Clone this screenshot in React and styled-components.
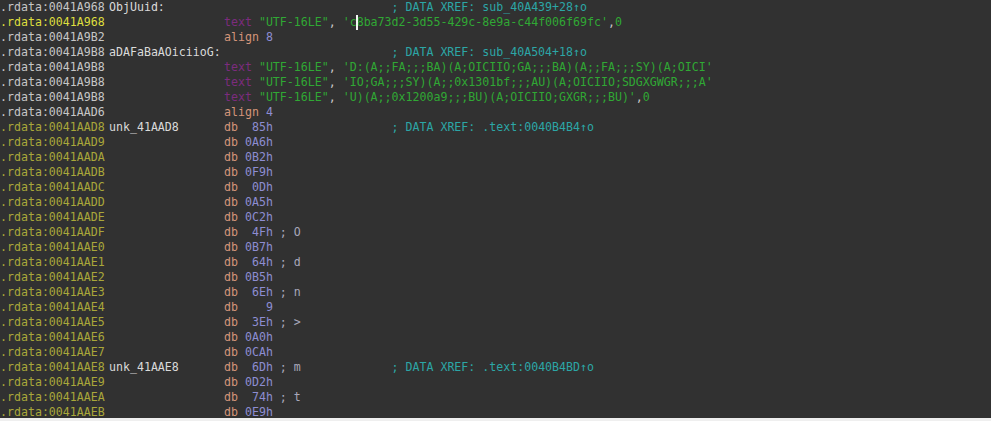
import React from 'react';
import styled, { createGlobalStyle } from 'styled-components';

const GlobalStyle = createGlobalStyle`
    html, body {
        margin: 0;
        padding: 0;
        background: #efefef;
    }
`;

const colors = {
    addr: '#c6c6c6',
    cur: '#dede3e',
    seg: '#a9a73a',
    nm: '#dadada',
    kw: '#7c2c7e',
    str: '#30a834',
    pl: '#c6c6c6',
    mn: '#d4957a',
    num: '#8d8dd2',
    xr: '#2ca6a6',
    cm: '#a8a8ba',
};

const Listing = styled.div`
    height: 418px;
    overflow: hidden;
    background: #313131;
    font-family: "DejaVu Sans Mono", "Liberation Mono", monospace;
    font-size: 11.6px;
    line-height: 15px;
`;

const Line = styled.div`
    display: grid;
    grid-template-columns: 109px 115px 1fr;
    height: 15px;
    white-space: pre;
`;

const Addr = styled.span`
    color: ${p => colors[p.$k]};
`;

const Name = styled.span`
    color: ${colors.nm};
`;

const Body = styled.span`
    overflow: hidden;
`;

const Tok = styled.span`
    color: ${p => colors[p.$k] || colors.pl};
`;

const Caret = styled.span`
    position: relative;
    display: inline-block;
    width: 0;
    height: 15px;
    vertical-align: top;

    &::after {
        content: '';
        position: absolute;
        left: -1px;
        top: 0;
        width: 2px;
        height: 15px;
        background: #f4f4f4;
    }
`;

const len = toks => toks.reduce((n, t) => n + (t[0] === 'caret' ? 0 : t[1].length), 0);

// one listing row: address, optional label, optional instruction, optional xref
const row = (addr, kind, name, body, xref) => {
    const toks = body ? [...body] : [];
    if (xref) {
        toks.push(['pl', ' '.repeat(Math.max(1, 24 - len(toks)))]);
        toks.push(['xr', '; DATA XREF: ' + xref]);
    }
    return { addr, kind, name, toks };
};

const text = (s, tail) => [
    ['kw', 'text'], ['pl', ' '], ['str', '"UTF-16LE"'], ['pl', ', '],
    ...s,
    ...(tail ? [['pl', ','], ['str', '0']] : []),
];

const db = (v, c) => {
    const t = [['mn', 'db'], ['pl', ' '], ['num', v.padStart(4)]];
    if (c) t.push(['cm', ' ; ' + c]);
    return t;
};

const align = n => [['mn', 'align'], ['pl', ' '], ['num', String(n)]];

const bytes = [
    ['AAD9', '0A6h'], ['AADA', '0B2h'], ['AADB', '0F9h'], ['AADC', '0Dh'],
    ['AADD', '0A5h'], ['AADE', '0C2h'], ['AADF', '4Fh', 'O'], ['AAE0', '0B7h'],
    ['AAE1', '64h', 'd'], ['AAE2', '0B5h'], ['AAE3', '6Eh', 'n'], ['AAE4', '9'],
    ['AAE5', '3Eh', '>'], ['AAE6', '0A0h'], ['AAE7', '0CAh'],
];

const lines = [
    row('.rdata:0041A968', 'addr', 'ObjUuid:', null, 'sub_40A439+28\u2191o'),
    row('.rdata:0041A968', 'cur', null, text([
        ['str', "'c"], ['caret', ''], ['str', "8ba73d2-3d55-429c-8e9a-c44f006f69fc'"],
    ], true)),
    row('.rdata:0041A9B2', 'addr', null, align(8)),
    row('.rdata:0041A9B8', 'addr', 'aDAFaBaAOiciioG:', null, 'sub_40A504+18\u2191o'),
    row('.rdata:0041A9B8', 'addr', null, text([['str', "'D:(A;;FA;;;BA)(A;OICIIO;GA;;;BA)(A;;FA;;;SY)(A;OICI'"]])),
    row('.rdata:0041A9B8', 'addr', null, text([['str', "'IO;GA;;;SY)(A;;0x1301bf;;;AU)(A;OICIIO;SDGXGWGR;;;A'"]])),
    row('.rdata:0041A9B8', 'addr', null, text([['str', "'U)(A;;0x1200a9;;;BU)(A;OICIIO;GXGR;;;BU)'"]], true)),
    row('.rdata:0041AAD6', 'addr', null, align(4)),
    row('.rdata:0041AAD8', 'seg', 'unk_41AAD8', db('85h'), '.text:0040B4B4\u2191o'),
    ...bytes.map(([a, v, c]) => row('.rdata:0041' + a, 'seg', null, db(v, c))),
    row('.rdata:0041AAE8', 'seg', 'unk_41AAE8', db('6Dh', 'm'), '.text:0040B4BD\u2191o'),
    row('.rdata:0041AAE9', 'seg', null, db('0D2h')),
    row('.rdata:0041AAEA', 'seg', null, db('74h', 't')),
    row('.rdata:0041AAEB', 'seg', null, db('0E9h')),
];

export default function App() {
    return (
        <>
            <GlobalStyle />
            <Listing>
                {lines.map((ln, i) => (
                    <Line key={i}>
                        <Addr $k={ln.kind}>{ln.addr}</Addr>
                        <Name>{ln.name || ''}</Name>
                        <Body>
                            {ln.toks.map(([k, s], j) =>
                                k === 'caret' ? <Caret key={j} /> : <Tok key={j} $k={k}>{s}</Tok>
                            )}
                        </Body>
                    </Line>
                ))}
            </Listing>
        </>
    );
}
